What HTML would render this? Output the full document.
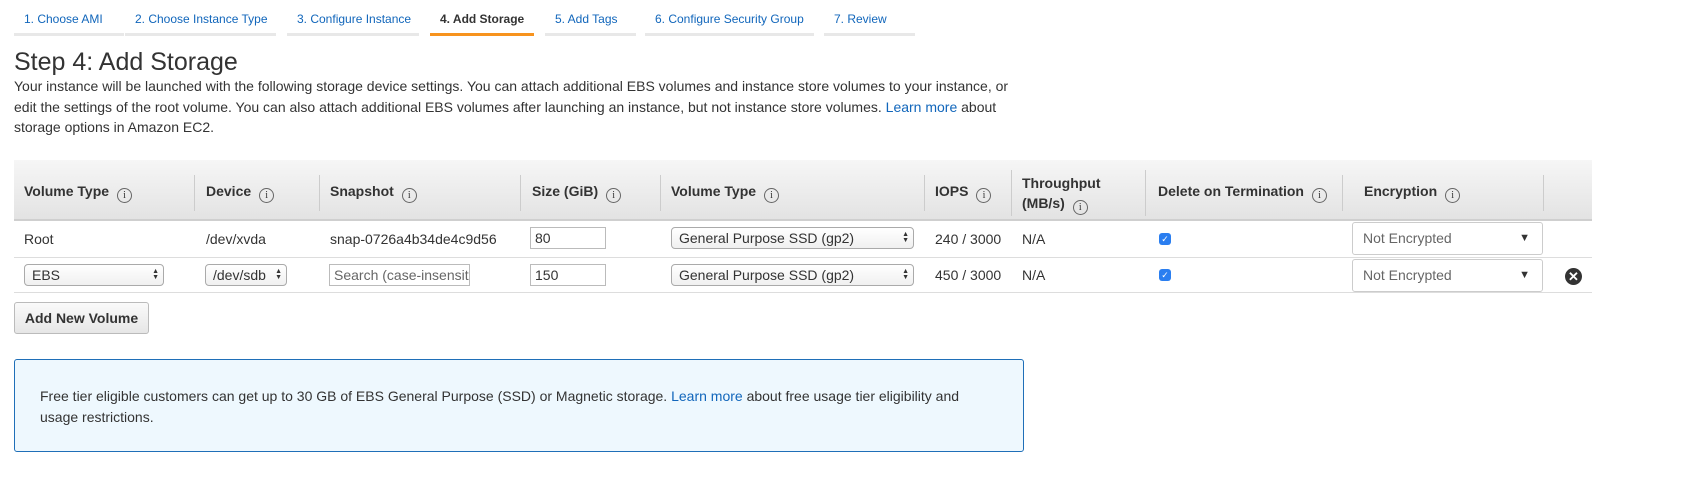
<!DOCTYPE html>
<html><head><meta charset="utf-8"><style>
*{box-sizing:border-box;margin:0;padding:0}
body{width:1705px;height:487px;background:#fff;font-family:"Liberation Sans",Arial,sans-serif;color:#444;position:relative;overflow:hidden}
a{color:#1166bb;text-decoration:none}
.tab{position:absolute;top:12px;height:24px;border-bottom:3px solid #e8e8e8;font-size:12px;color:#1166bb;padding-left:10px;line-height:15px}
.tab.on{border-bottom-color:#f7931e;color:#333;font-weight:bold}
h1{position:absolute;left:14px;top:48px;font-size:25px;font-weight:normal;color:#333}
.p{position:absolute;left:14px;top:76px;font-size:14px;line-height:20.5px;color:#333;width:1024px}
.hdr{position:absolute;left:14px;top:160px;width:1578px;height:61px;background:linear-gradient(#f6f6f6,#e3e3e3);border-bottom:2px solid #cfcfcf}
.th{position:absolute;font-size:14px;font-weight:bold;color:#333;white-space:nowrap}
.i{display:inline-block;width:15px;height:15px;border:1px solid #666;border-radius:50%;font-size:10px;font-weight:normal;text-align:center;line-height:13px;margin-left:8px;vertical-align:-2px;font-family:"Liberation Serif",serif}
.dv{position:absolute;width:1px;background:#ccc}
.td{position:absolute;font-size:14px;color:#333;white-space:nowrap}
.rl{position:absolute;left:14px;width:1578px;height:1px;background:#ddd}
.in{position:absolute;border:1px solid #bbb;background:#fff;font-size:14px;color:#333;padding-left:4px;line-height:20px;height:22px;overflow:hidden;white-space:nowrap}
.sel{position:absolute;border:1px solid #aaa;border-radius:4px;background:linear-gradient(#fff,#f0f0f0);font-size:14px;color:#333;padding-left:7px;line-height:20px;height:22px;white-space:nowrap}
.ud{position:absolute;right:4px;top:4px;font-size:7px;line-height:6px;color:#333}
.enc{position:absolute;border:1px solid #ccc;border-radius:3px;background:#fff;font-size:14px;color:#666;padding-left:10px;line-height:30px;height:33px}
.cb{position:absolute;width:12px;height:12px;background:#2a7ef0;border-radius:3px;color:#fff;font-size:9px;text-align:center;line-height:12px}
</style></head><body>
<div class="tab" style="left:14px;width:110px">1. Choose AMI</div>
<div class="tab" style="left:125px;width:151px">2. Choose Instance Type</div>
<div class="tab" style="left:287px;width:132px">3. Configure Instance</div>
<div class="tab on" style="left:430px;width:104px">4. Add Storage</div>
<div class="tab" style="left:545px;width:91px">5. Add Tags</div>
<div class="tab" style="left:645px;width:169px">6. Configure Security Group</div>
<div class="tab" style="left:824px;width:91px">7. Review</div>
<h1>Step 4: Add Storage</h1>
<div class="p">Your instance will be launched with the following storage device settings. You can attach additional EBS volumes and instance store volumes to your instance, or<br>edit the settings of the root volume. You can also attach additional EBS volumes after launching an instance, but not instance store volumes. <a>Learn more</a> about<br>storage options in Amazon EC2.</div>
<div class="hdr"></div>
<div class="th" style="left:24px;top:183px">Volume Type<span class="i">i</span></div>
<div class="dv" style="left:194px;top:175px;height:36px"></div>
<div class="th" style="left:206px;top:183px">Device<span class="i">i</span></div>
<div class="dv" style="left:319px;top:175px;height:36px"></div>
<div class="th" style="left:330px;top:183px">Snapshot<span class="i">i</span></div>
<div class="dv" style="left:520px;top:175px;height:36px"></div>
<div class="th" style="left:532px;top:183px">Size (GiB)<span class="i">i</span></div>
<div class="dv" style="left:660px;top:175px;height:36px"></div>
<div class="th" style="left:671px;top:183px">Volume Type<span class="i">i</span></div>
<div class="dv" style="left:924px;top:175px;height:36px"></div>
<div class="th" style="left:935px;top:183px">IOPS<span class="i">i</span></div>
<div class="dv" style="left:1011px;top:170px;height:46px"></div>
<div class="th" style="left:1022px;top:173px;line-height:20px">Throughput<br>(MB/s)<span class="i">i</span></div>
<div class="dv" style="left:1145px;top:170px;height:46px"></div>
<div class="th" style="left:1158px;top:183px">Delete on Termination<span class="i">i</span></div>
<div class="dv" style="left:1342px;top:175px;height:36px"></div>
<div class="th" style="left:1364px;top:183px">Encryption<span class="i">i</span></div>
<div class="dv" style="left:1543px;top:175px;height:36px"></div>

<div class="td" style="left:24px;top:231px">Root</div>
<div class="td" style="left:206px;top:231px">/dev/xvda</div>
<div class="td" style="left:330px;top:231px">snap-0726a4b34de4c9d56</div>
<div class="in" style="left:530px;top:227px;width:76px">80</div>
<div class="sel" style="left:671px;top:227px;width:243px">General Purpose SSD (gp2)<span class="ud">▲<br>▼</span></div>
<div class="td" style="left:935px;top:231px">240 / 3000</div>
<div class="td" style="left:1022px;top:231px">N/A</div>
<div class="cb" style="left:1159px;top:233px">✓</div>
<div class="enc" style="left:1352px;top:222px;width:191px">Not Encrypted<span style="position:absolute;right:12px;top:0;font-size:11px;color:#333">▼</span></div>
<div class="rl" style="top:257px"></div>

<div class="sel" style="left:24px;top:264px;width:140px">EBS<span class="ud">▲<br>▼</span></div>
<div class="sel" style="left:205px;top:264px;width:82px">/dev/sdb<span class="ud">▲<br>▼</span></div>
<div class="in" style="left:329px;top:264px;width:141px;color:#666">Search (case-insensit</div>
<div class="in" style="left:530px;top:264px;width:76px">150</div>
<div class="sel" style="left:671px;top:264px;width:243px">General Purpose SSD (gp2)<span class="ud">▲<br>▼</span></div>
<div class="td" style="left:935px;top:267px">450 / 3000</div>
<div class="td" style="left:1022px;top:267px">N/A</div>
<div class="cb" style="left:1159px;top:269px">✓</div>
<div class="enc" style="left:1352px;top:259px;width:191px">Not Encrypted<span style="position:absolute;right:12px;top:0;font-size:11px;color:#333">▼</span></div>
<div style="position:absolute;left:1565px;top:268px;width:17px;height:17px;border-radius:50%;background:#333;color:#fff;font-size:13px;font-weight:bold;text-align:center;line-height:17px">✕</div>
<div class="rl" style="top:292px"></div>

<div style="position:absolute;left:14px;top:302px;width:135px;height:32px;border:1px solid #bbb;border-radius:3px;background:linear-gradient(#fafafa,#e6e6e6);font-size:14px;font-weight:bold;color:#333;text-align:center;line-height:30px">Add New Volume</div>

<div style="position:absolute;left:14px;top:359px;width:1010px;height:93px;border:1px solid #1f6fb8;border-radius:3px;background:#eef8fe"></div>
<div class="p" style="left:40px;top:386px;width:980px;line-height:21px">Free tier eligible customers can get up to 30 GB of EBS General Purpose (SSD) or Magnetic storage. <a>Learn more</a> about free usage tier eligibility and<br>usage restrictions.</div>
</body></html>
